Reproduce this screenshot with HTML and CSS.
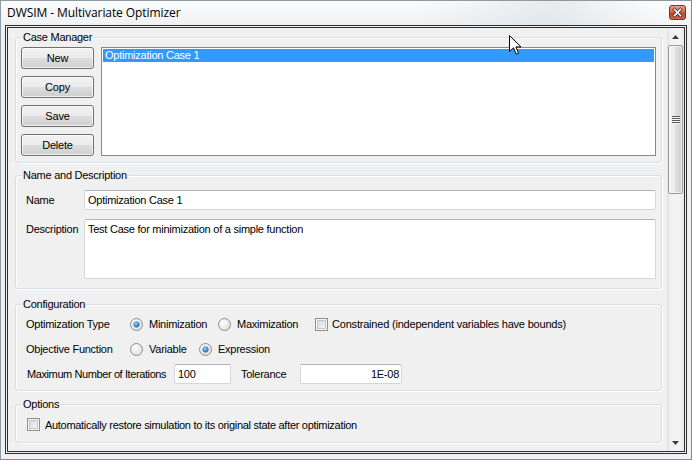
FILE: index.html
```html
<!DOCTYPE html>
<html>
<head>
<meta charset="utf-8">
<title>DWSIM - Multivariate Optimizer</title>
<link rel="stylesheet" href="styles.css">
</head>
<body>
<div class="window">
  <div class="titlebar">
    <span class="title">DWSIM - Multivariate Optimizer</span>
    <span class="close">
      <svg width="17" height="15" viewBox="0 0 17 15">
        <defs>
          <linearGradient id="cg" x1="0" y1="0" x2="0" y2="1">
            <stop offset="0" stop-color="#eaa996"/>
            <stop offset="0.45" stop-color="#d8674c"/>
            <stop offset="0.55" stop-color="#c4452a"/>
            <stop offset="1" stop-color="#d2644a"/>
          </linearGradient>
        </defs>
        <rect x="0.5" y="0.5" width="16" height="14" rx="2.5" fill="url(#cg)" stroke="#7a3424"/>
        <path d="M5.5 4.5 L11.5 10.5 M11.5 4.5 L5.5 10.5" stroke="#3a3a3a" stroke-width="3.2" stroke-linecap="square"/>
        <path d="M5.5 4.5 L11.5 10.5 M11.5 4.5 L5.5 10.5" stroke="#ffffff" stroke-width="1.6" stroke-linecap="square"/>
      </svg>
    </span>
  </div>
  <div class="client">
    <div class="content">
      <section class="group g-case">
        <div class="legend">Case Manager</div>
        <div class="case-body">
          <div class="btn-col">
            <button class="btn">New</button>
            <button class="btn">Copy</button>
            <button class="btn">Save</button>
            <button class="btn">Delete</button>
          </div>
          <div class="listbox">
            <div class="item sel">Optimization Case 1</div>
          </div>
        </div>
      </section>

      <section class="group g-name">
        <div class="legend">Name and Description</div>
        <div class="form-grid">
          <span class="lbl">Name</span>
          <div class="textbox">Optimization Case 1</div>
          <span class="lbl lbl-top">Description</span>
          <div class="textbox textarea">Test Case for minimization of a simple function</div>
        </div>
      </section>

      <section class="group g-config">
        <div class="legend">Configuration</div>
        <div class="config-body">
          <div class="row">
            <span class="rlabel">Optimization Type</span>
            <span class="opt w88"><span class="radio checked"></span>Minimization</span>
            <span class="opt w97"><span class="radio"></span>Maximization</span>
            <span class="opt chk-opt"><span class="check"></span>Constrained (independent variables have bounds)</span>
          </div>
          <div class="row">
            <span class="rlabel">Objective Function</span>
            <span class="opt w69"><span class="radio"></span>Variable</span>
            <span class="opt"><span class="radio checked"></span>Expression</span>
          </div>
          <div class="row">
            <span class="rlabel iter">Maximum Number of Iterations</span>
            <div class="textbox tb-iter">100</div>
            <span class="tol-label">Tolerance</span>
            <div class="textbox tb-tol">1E-08</div>
          </div>
        </div>
      </section>

      <section class="group g-opts">
        <div class="legend">Options</div>
        <div class="opts-body">
          <span class="opt opt-restore"><span class="check"></span>Automatically restore simulation to its original state after optimization</span>
        </div>
      </section>
    </div>
    <div class="vscroll">
      <div class="sb-btn">
        <svg width="7" height="4" viewBox="0 0 7 4"><path d="M3.5 0 L7 4 L0 4 Z" fill="#3c3c3c"/></svg>
      </div>
      <div class="sb-track">
        <div class="thumb">
          <svg width="8" height="8" viewBox="0 0 8 8">
            <rect x="0" y="0" width="8" height="1" fill="#5a5a5a"/>
            <rect x="0" y="2" width="8" height="1" fill="#5a5a5a"/>
            <rect x="0" y="4" width="8" height="1" fill="#5a5a5a"/>
            <rect x="0" y="6" width="8" height="1" fill="#5a5a5a"/>
            <rect x="0" y="1" width="8" height="1" fill="#f4f4f4"/>
            <rect x="0" y="3" width="8" height="1" fill="#f4f4f4"/>
            <rect x="0" y="5" width="8" height="1" fill="#f4f4f4"/>
            <rect x="0" y="7" width="8" height="1" fill="#f4f4f4"/>
          </svg>
        </div>
      </div>
      <div class="sb-btn">
        <svg width="7" height="4" viewBox="0 0 7 4"><path d="M0 0 L7 0 L3.5 4 Z" fill="#3c3c3c"/></svg>
      </div>
    </div>
  </div>
</div>
<svg class="cursor" width="13" height="21" viewBox="0 0 13 21">
  <path d="M0.5 0.5 L0.5 16.5 L4.5 12.8 L7.2 19.2 L9.6 18.2 L6.9 11.9 L12 11.9 Z" fill="#ffffff" stroke="#000000" stroke-width="1" stroke-linejoin="miter"/>
</svg>
</body>
</html>
```

FILE: styles.css
```css
* { box-sizing: border-box; }

body {
  margin: 0;
  font-family: "Liberation Sans", Arial, sans-serif;
  font-size: 11px;
  letter-spacing: -0.25px;
  color: #000;
  background: #ffffff;
}

.window {
  position: relative;
  width: 692px;
  height: 460px;
  border: 1px solid #8d99a3;
  border-right-color: #3fa2b7;
  border-bottom-color: #3fa2b7;
  background: linear-gradient(to bottom, #fbfcfc 0, #eef0f2 26px, #eef0f2 100%);
  padding: 0 4px 5px;
  display: flex;
  flex-direction: column;
}

.titlebar {
  height: 24px;
  flex: none;
  display: flex;
  align-items: center;
  justify-content: space-between;
  background: linear-gradient(100deg, rgba(255,255,255,0) 60%, rgba(220,224,228,0.6) 80%, rgba(255,255,255,0.2) 95%);
}

.title {
  font-family: "Open Sans", "Noto Sans", sans-serif;
  font-size: 12px;
  letter-spacing: -0.08px;
  padding-left: 2px;
  padding-bottom: 2px;
  color: #000;
}

.close {
  align-self: flex-start;
  margin-top: 4px;
  margin-right: 1px;
  width: 17px;
  height: 15px;
  display: block;
}
.close svg { display: block; }

.client {
  flex: 1;
  min-height: 0;
  border: 3px double #2e2e2e;
  display: flex;
}

.content {
  flex: 1;
  min-width: 0;
  background: #f0f0f0;
  overflow: hidden;
  padding: 0 5px 0 7px;
}

/* group boxes */
.group {
  border: 1px solid #d5dfe5;
  border-radius: 3px;
  box-shadow: 1px 1px 0 #ffffff, inset 1px 1px 0 #ffffff;
}

.legend {
  width: max-content;
  height: 13px;
  line-height: 13px;
  margin: -7px 0 -6px 6px;
  padding: 0 1px;
  background: #f0f0f0;
  position: relative;
}

.g-case { margin-top: 9px; }
.g-name { margin-top: 12px; }
.g-config { margin-top: 15px; }
.g-opts { margin-top: 13px; }

/* case manager */
.case-body {
  display: flex;
  gap: 7px;
  padding: 9px 5px 6px 5px;
}

.btn-col {
  display: flex;
  flex-direction: column;
  gap: 7px;
  width: 73px;
  flex: none;
}

.btn {
  width: 73px;
  height: 22px;
  padding: 0;
  border: 1px solid #707070;
  border-radius: 3px;
  background: linear-gradient(to bottom, #f2f2f2 0%, #ebebeb 48%, #dddddd 52%, #cfcfcf 100%);
  box-shadow: inset 0 0 0 1px rgba(255,255,255,0.7);
  font-family: inherit;
  font-size: 11px;
  letter-spacing: -0.2px;
  color: #000;
  line-height: 18px;
}

.listbox {
  flex: 1;
  height: 109px;
  border: 1px solid #828790;
  background: #ffffff;
  padding: 1px;
}

.item {
  height: 13px;
  line-height: 13px;
  padding-left: 2px;
}
.item.sel {
  background: #3399ff;
  color: #ffffff;
}

/* name & description */
.form-grid {
  display: grid;
  grid-template-columns: 58px 1fr;
  row-gap: 9px;
  padding: 14px 5px 9px 10px;
}

.lbl { line-height: 20px; }
.lbl-top { line-height: 13px; padding-top: 4px; }

.textbox {
  height: 20px;
  border: 1px solid #d3d7dc;
  border-top-color: #b1b4ba;
  border-radius: 2px;
  background: #ffffff;
  padding: 0 3px;
  line-height: 18px;
  white-space: nowrap;
}

.textarea {
  height: 60px;
  line-height: 13px;
  padding-top: 3px;
}

/* configuration */
.config-body {
  display: flex;
  flex-direction: column;
  gap: 5px;
  padding: 9px 5px 6px 10px;
}

.row {
  display: flex;
  align-items: center;
  height: 20px;
}

.rlabel { width: 104px; flex: none; }
.rlabel.iter { width: 148px; padding-left: 1px; letter-spacing: -0.4px; }

.opt {
  display: flex;
  align-items: center;
  gap: 6px;
  flex: none;
  white-space: nowrap;
}
.w88 { width: 88px; }
.w97 { width: 97px; }
.w69 { width: 69px; }
.chk-opt { gap: 4px; letter-spacing: -0.2px; }

.tb-iter { width: 57px; flex: none; }
.tol-label { width: 59px; margin-left: 10px; flex: none; }
.tb-tol { width: 102px; flex: none; text-align: right; padding-right: 2px; }

.radio {
  position: relative;
  width: 13px;
  height: 13px;
  flex: none;
  border-radius: 50%;
  border: 1px solid #8e8f8f;
  background: radial-gradient(circle at 38% 35%, #ffffff 0, #f0f0f0 35%, #d6d6d6 100%);
}
.radio.checked::after {
  content: "";
  position: absolute;
  left: 3px;
  top: 3px;
  width: 5px;
  height: 5px;
  border-radius: 50%;
  background: radial-gradient(circle at 40% 35%, #9ad8ff 0, #2b86d0 55%, #0d3f78 100%);
  box-shadow: 0 0 0 0.5px #1f4f7d;
}

.check {
  width: 13px;
  height: 13px;
  flex: none;
  border: 1px solid #8e8f8f;
  background: linear-gradient(135deg, #cfd1d3 0%, #e9e9e9 55%, #f8f8f8 100%);
  box-shadow: inset 0 0 0 1px #f6f6f6, inset 0 0 0 2px #c5c7ca;
}

/* options */
.opts-body {
  padding: 13px 5px 11px 11px;
}
.opt-restore { gap: 5px; letter-spacing: -0.3px; }

/* scrollbar */
.vscroll {
  width: 17px;
  flex: none;
  display: flex;
  flex-direction: column;
  background: linear-gradient(to right, #e4e4e4 0, #f2f2f2 25%, #f4f4f4 75%, #e9e9e9 100%);
}

.sb-btn {
  height: 17px;
  flex: none;
  display: flex;
  align-items: center;
  justify-content: center;
}
.sb-btn svg { display: block; }

.sb-track {
  flex: 1;
  min-height: 0;
}

.thumb {
  height: 149px;
  margin: 0 1px;
  border: 1px solid #9a9a9a;
  border-radius: 2px;
  background: linear-gradient(to right, #f4f4f4 0%, #ebebeb 45%, #dcdcdc 55%, #d2d2d2 100%);
  box-shadow: inset 0 0 0 1px rgba(255,255,255,0.6);
  display: flex;
  align-items: center;
  justify-content: center;
}
.thumb svg { display: block; }

.cursor {
  position: absolute;
  left: 509px;
  top: 35px;
}
```
